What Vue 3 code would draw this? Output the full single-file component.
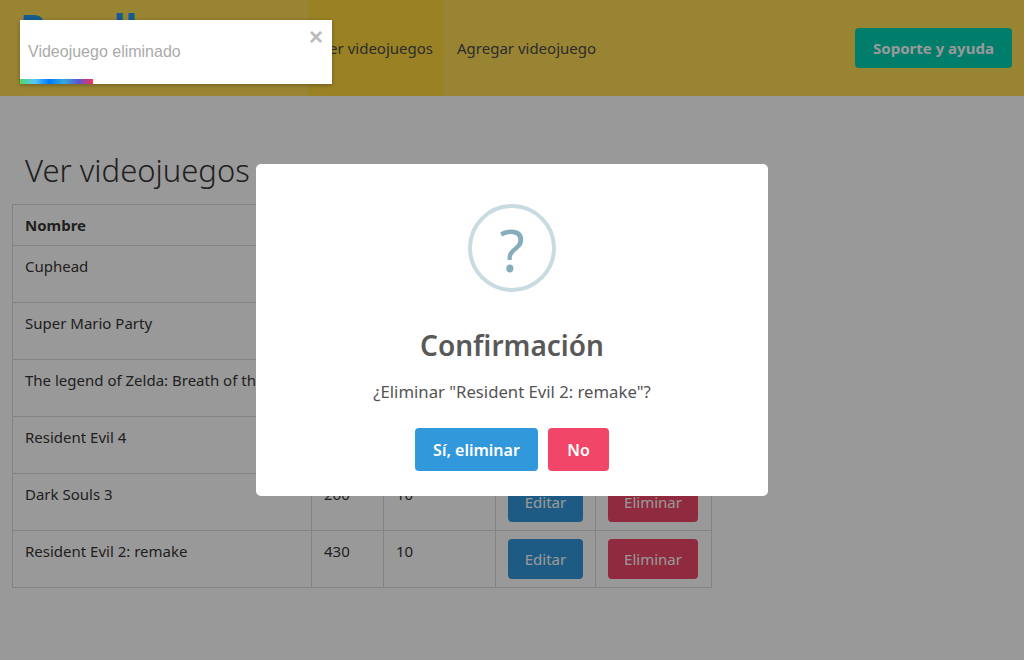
<template>
  <div class="page">
    <nav class="navbar">
      <div class="brand">Pacall</div>
      <div class="nav-links">
        <a class="nav-item active">Ver videojuegos</a>
        <a class="nav-item">Agregar videojuego</a>
      </div>
      <div class="nav-end">
        <a class="btn btn-primary">Soporte y ayuda</a>
      </div>
    </nav>

    <section class="content">
      <h1>Ver videojuegos</h1>
      <table>
        <thead>
          <tr>
            <th class="col-name">Nombre</th>
            <th class="col-price">Precio</th>
            <th class="col-rating">Calificación</th>
            <th class="col-edit">Editar</th>
            <th class="col-del">Eliminar</th>
          </tr>
        </thead>
        <tbody>
          <tr v-for="game in games" :key="game.name">
            <td>{{ game.name }}</td>
            <td>{{ game.price }}</td>
            <td>{{ game.rating }}</td>
            <td><a class="btn btn-info">Editar</a></td>
            <td><a class="btn btn-danger">Eliminar</a></td>
          </tr>
        </tbody>
      </table>
    </section>

    <div class="overlay">
      <div class="modal">
        <div class="question"><span>?</span></div>
        <h2>Confirmación</h2>
        <p>¿Eliminar "Resident Evil 2: remake"?</p>
        <div class="modal-actions">
          <button class="modal-btn yes">Sí, eliminar</button>
          <button class="modal-btn no">No</button>
        </div>
      </div>
    </div>

    <div class="toast">
      <span class="toast-close">×</span>
      <div class="toast-text">Videojuego eliminado</div>
      <div class="toast-progress"></div>
    </div>
  </div>
</template>

<script setup>
  const games = [
    { name: "Cuphead", price: 350, rating: 10 },
    { name: "Super Mario Party", price: 1200, rating: 9 },
    { name: "The legend of Zelda: Breath of the Wild", price: 1400, rating: 10 },
    { name: "Resident Evil 4", price: 300, rating: 10 },
    { name: "Dark Souls 3", price: 260, rating: 10 },
    { name: "Resident Evil 2: remake", price: 430, rating: 10 }
  ]
</script>

<style>
  body {
    margin: 0;
    background: #fff;
  }
</style>

<style scoped>
  .page {
    position: relative;
    height: 660px;
    overflow: hidden;
    font-family: "Noto Sans", "Open Sans", sans-serif;
    font-size: 15px;
    color: #4a4a4a;
  }

  .navbar {
    display: flex;
    align-items: stretch;
    height: 96px;
    background: #ffdd57;
  }

  .brand {
    width: 308px;
    box-sizing: border-box;
    padding: 2px 0 0 20px;
    font-size: 40px;
    font-weight: 700;
    line-height: 52px;
    color: #209cee;
  }

  .nav-links {
    display: flex;
  }

  .nav-item {
    display: flex;
    align-items: center;
    padding: 0 13px;
    white-space: nowrap;
    color: #4a4a4a;
  }

  .nav-item.active {
    width: 136px;
    box-sizing: border-box;
    padding: 0 11px 0 0;
    justify-content: flex-end;
    background: #ffd83d;
  }

  .nav-end {
    display: flex;
    align-items: center;
    margin-left: auto;
    padding-right: 12px;
  }

  .btn {
    display: inline-flex;
    align-items: center;
    justify-content: center;
    height: 40px;
    box-sizing: border-box;
    border-radius: 4px;
    color: #fff;
  }

  .btn-primary {
    width: 157px;
    background: #00d1b2;
    font-weight: 700;
  }

  .btn-info {
    width: 75px;
    background: #3298dc;
  }

  .btn-danger {
    width: 90px;
    background: #f14668;
  }

  .content {
    padding: 52px 12px 0;
  }

  h1 {
    margin: 0 0 12px;
    padding-left: 13px;
    font-size: 31px;
    font-weight: 300;
    line-height: 44px;
    color: #363636;
  }

  table {
    width: 699px;
    table-layout: fixed;
    border-collapse: collapse;
    color: #363636;
  }

  th,
  td {
    border: 1px solid #dbdbdb;
    padding: 8px 12px;
    box-sizing: border-box;
    text-align: left;
    vertical-align: top;
    white-space: nowrap;
    overflow: hidden;
  }

  th {
    height: 41px;
    padding-top: 10px;
    font-weight: 700;
  }

  td {
    height: 57px;
    line-height: 24px;
  }

  .col-name { width: 299px; }
  .col-price { width: 72px; }
  .col-rating { width: 112px; }
  .col-edit { width: 100px; }
  .col-del { width: 116px; }

  .overlay {
    position: absolute;
    inset: 0;
    display: flex;
    justify-content: center;
    align-items: flex-start;
    padding-top: 164px;
    box-sizing: border-box;
    background: rgba(0, 0, 0, 0.4);
  }

  .modal {
    width: 512px;
    height: 332px;
    box-sizing: border-box;
    padding-top: 40px;
    border-radius: 5px;
    background: #fff;
    text-align: center;
  }

  .question {
    display: flex;
    align-items: center;
    justify-content: center;
    width: 88px;
    height: 88px;
    box-sizing: border-box;
    margin: 0 auto;
    padding-top: 3px;
    border: 4px solid #c9dae1;
    border-radius: 50%;
    color: #87adbd;
    font-size: 58px;
    line-height: 1;
  }

  h2 {
    margin: 31px 0 0;
    font-size: 28px;
    font-weight: 600;
    line-height: 44px;
    color: #595959;
  }

  p {
    margin: 12px 0 0;
    font-size: 16.7px;
    line-height: 26px;
    color: #545454;
  }

  .modal-actions {
    display: flex;
    justify-content: center;
    gap: 10px;
    margin-top: 23px;
  }

  .modal-btn {
    height: 43px;
    border: 0;
    border-radius: 4px;
    padding: 1px 0 0;
    color: #fff;
    font-family: inherit;
    font-size: 16px;
    font-weight: 600;
  }

  .modal-btn.yes {
    width: 123px;
    background: #3298dc;
  }

  .modal-btn.no {
    width: 61px;
    background: #f14668;
  }

  .toast {
    position: absolute;
    top: 20px;
    left: 20px;
    width: 312px;
    height: 64px;
    box-sizing: border-box;
    padding: 22px 8px 0;
    background: #fff;
    box-shadow: 0 1px 4px rgba(0, 0, 0, 0.3);
    font-family: "Liberation Sans", Arial, sans-serif;
    font-size: 16px;
    line-height: 20px;
    color: #aaa;
  }

  .toast-close {
    position: absolute;
    top: 5px;
    right: 9px;
    font-size: 24px;
    font-weight: 700;
    line-height: 24px;
    color: #bbb;
  }

  .toast-progress {
    position: absolute;
    left: 0;
    bottom: 0;
    width: 73px;
    height: 5px;
    background: linear-gradient(to right, #4cd964, #5ac8fa, #007aff, #34aadc, #5856d6, #ff2d55);
  }
</style>
